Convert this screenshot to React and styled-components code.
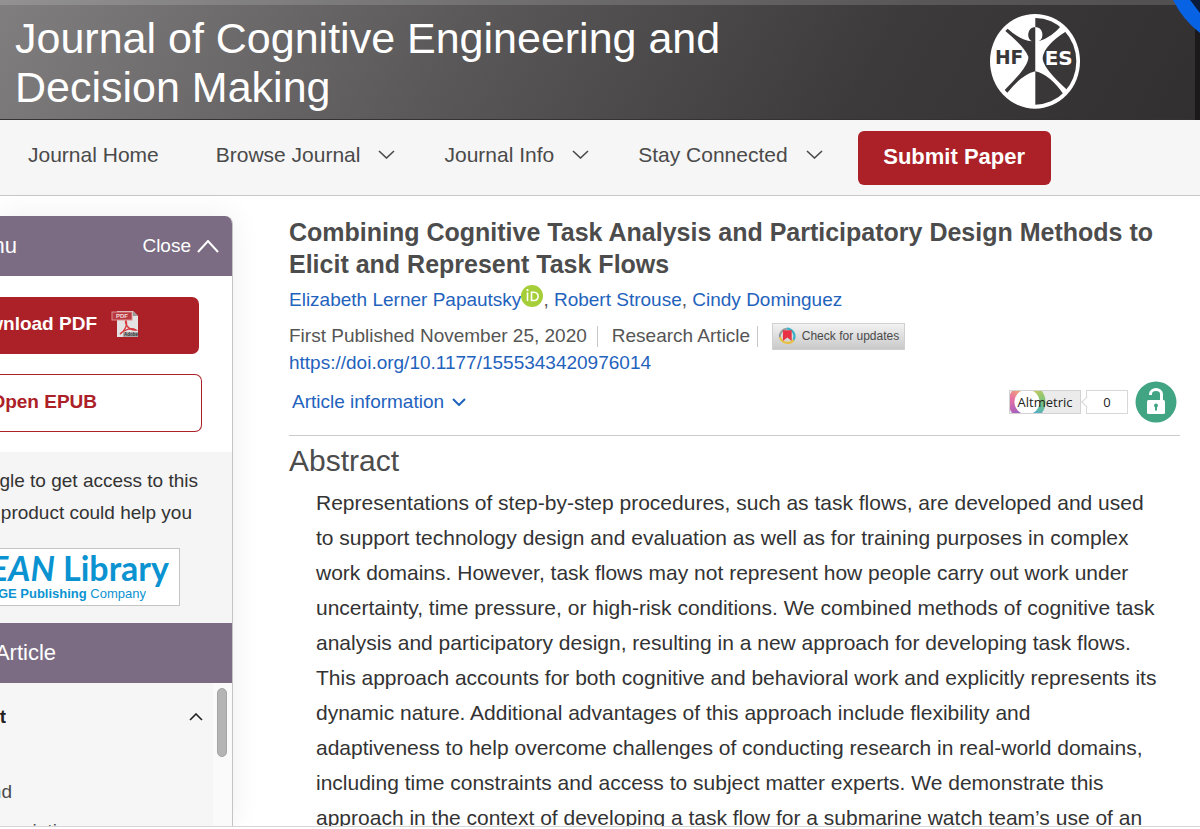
import React from "react";
import styled, { createGlobalStyle } from "styled-components";

const GlobalStyle = createGlobalStyle`
  * {
    box-sizing: border-box;
  }

  body {
    margin: 0;
    background: #fff;
    font-family: "Liberation Sans", Arial, sans-serif;
    color: #333;
  }

  h1, h2, h3, p {
    margin: 0;
  }

  a {
    color: #1f63bd;
    text-decoration: none;
  }

  button {
    font-family: inherit;
    cursor: pointer;
  }
`;

const Page = styled.div`
  display: flex;
  flex-direction: column;
  height: 100vh;
  overflow: hidden;
`;

const Banner = styled.header`
  display: flex;
  justify-content: space-between;
  padding: 9px 120px 7px 15px;
  border-top: 5px solid rgba(255, 255, 255, 0.15);
  border-bottom: 1px solid #333;
  background: linear-gradient(120deg, #807e7f 0%, #5a5859 38%, #3d3a3b 72%, #322f30 100%) border-box;
  position: relative;
  flex: none;
`;

const JournalName = styled.h1`
  max-width: 760px;
  font-size: 43px;
  font-weight: 400;
  line-height: 49px;
  color: #fff;
`;

const Society = styled.svg`
  width: 90px;
  height: 95px;
  flex: none;
`;

const Corner = styled.svg`
  position: absolute;
  top: -5px;
  right: 0;
  width: 30px;
  height: 120px;
`;

const Nav = styled.nav`
  display: flex;
  align-items: center;
  flex: none;
  height: 76px;
  padding: 0 28px;
  background: #f6f6f6;
  border-bottom: 1px solid #c9c9c9;
`;

const NavLink = styled.a`
  display: flex;
  align-items: center;
  gap: 18px;
  margin-right: ${(p) => p.$gap || 49}px;
  padding-bottom: 6px;
  font-size: 21px;
  line-height: 26px;
  color: #4a4a4a;
  white-space: nowrap;
`;

const SubmitButton = styled.button`
  width: 193px;
  height: 54px;
  padding: 0 6px 2px;
  border: 0;
  border-radius: 6px;
  background: #ac2127;
  color: #fff;
  font-size: 22px;
  font-weight: 700;
`;

const Columns = styled.div`
  display: flex;
  flex: 1;
  min-height: 0;
  padding-top: 20px;
`;

const Sidebar = styled.aside`
  display: flex;
  flex-direction: column;
  width: 233px;
  flex: none;
  border-right: 1px solid #c4c4c4;
  border-top-right-radius: 8px;
  box-shadow: 0 0 30px rgba(0, 0, 0, 0.07);
  overflow: hidden;
`;

const SideBar = styled.div`
  display: flex;
  align-items: center;
  justify-content: space-between;
  flex: none;
  height: 60px;
  padding-right: 13px;
  background: #7b6c83;
  color: #fff;
  font-size: 22px;
`;

/* Right-aligned text that runs off the left edge of the window */
const Clip = styled.span`
  display: flex;
  justify-content: flex-end;
  width: ${(p) => p.$width}px;
  overflow: hidden;
  white-space: nowrap;
`;

const CloseButton = styled.button`
  display: flex;
  align-items: center;
  gap: 6px;
  padding: 0;
  border: 0;
  background: none;
  color: #fff;
  font-size: 19px;
`;

const Downloads = styled.div`
  display: flex;
  flex-direction: column;
  gap: 20px;
  padding: 21px 0 20px;
  background: #fff;
`;

const FormatButton = styled.button`
  display: flex;
  align-items: center;
  gap: 14px;
  width: ${(p) => (p.$outline ? 202 : 199)}px;
  height: ${(p) => (p.$outline ? 58 : 57)}px;
  padding: 0 0 3px;
  border: ${(p) => (p.$outline ? "1px solid #ac2127" : "0")};
  border-left: 0;
  border-radius: 0 7px 7px 0;
  background: ${(p) => (p.$outline ? "#fff" : "#ac2127")};
  color: ${(p) => (p.$outline ? "#ac2127" : "#fff")};
  font-size: 19px;
  font-weight: 700;
`;

const Promo = styled.div`
  display: flex;
  flex-direction: column;
  align-items: flex-start;
  padding: 13px 0 17px;
  background: #f5f5f5;
  font-size: 19px;
  line-height: 32px;
`;

const LibraryLink = styled.a`
  display: flex;
  flex-direction: column;
  align-items: flex-start;
  width: 180px;
  height: 58px;
  margin-top: 19px;
  border: 1px solid #c4c4c4;
  border-left: 0;
  background: #fff;
  color: #0b93d1;
`;

const LibraryName = styled.span`
  font-family: Lato, sans-serif;
  font-size: 34px;
  font-weight: 700;
  line-height: 38px;
`;

const LibraryOwner = styled.span`
  font-size: 13px;
  line-height: 14px;
`;

const Contents = styled.div`
  display: flex;
  flex: 1;
  min-height: 0;
  background: #f6f6f6;
`;

const Sections = styled.div`
  display: flex;
  flex-direction: column;
  flex: 1;
  padding-top: 22px;
`;

const SectionTitle = styled.div`
  display: flex;
  align-items: center;
  justify-content: space-between;
  padding-right: 10px;
  font-size: 19px;
  font-weight: 700;
  line-height: 24px;
  color: #222;
`;

const SectionLink = styled.a`
  margin-top: ${(p) => p.$top}px;
  font-size: 19px;
  line-height: 24px;
  color: #4a4a4a;
`;

const Track = styled.div`
  width: 19px;
  padding: 5px 4px;
  background: #fafafa;
`;

const Thumb = styled.div`
  height: 69px;
  width: 10px;
  border: 1px solid #a4a4a4;
  border-radius: 5px;
  background: #b4b4b4;
`;

const Article = styled.main`
  flex: 1;
  min-width: 0;
  padding: 0 20px 0 56px;
  overflow: hidden;
`;

const Title = styled.h2`
  font-size: 25px;
  line-height: 32px;
  color: #4c4c4c;
`;

const Authors = styled.div`
  display: flex;
  align-items: center;
  font-size: 19px;
  line-height: 40px;
  color: #555;
  white-space: pre;
`;

const Orcid = styled.svg`
  width: 22px;
  height: 22px;
  margin-bottom: 8px;
`;

const Meta = styled.div`
  display: flex;
  align-items: center;
  height: 32px;
  font-size: 19px;
  color: #555;
`;

const Divider = styled.span`
  width: 1px;
  height: 21px;
  margin: 0 14px 0 ${(p) => p.$left}px;
  background: #c8c8c8;
`;

const UpdatesButton = styled.button`
  display: flex;
  align-items: center;
  gap: 5px;
  width: 133px;
  height: 27px;
  padding: 0 5px;
  border: 1px solid #d0d0d0;
  background: linear-gradient(#f2f2f2, #c9c9c9);
  color: #4a4a4a;
  font-size: 12px;
  white-space: nowrap;
`;

const Doi = styled.a`
  display: block;
  font-size: 19px;
  line-height: 22px;
`;

const InfoRow = styled.div`
  display: flex;
  align-items: center;
  justify-content: space-between;
  height: 62px;
  padding: 0 3px 5px;
  border-bottom: 1px solid #ccc;
`;

const InfoButton = styled.button`
  display: flex;
  align-items: center;
  gap: 8px;
  padding: 0;
  border: 0;
  background: none;
  color: #1f63bd;
  font-size: 19px;
`;

const Badges = styled.div`
  display: flex;
  align-items: center;
`;

const Altmetric = styled.a`
  width: 72px;
  height: 24px;
  border: 1px solid #d2d2d2;
  background:
    radial-gradient(circle at 17px 11px, #fff 0 12px, transparent 13px 18px, #ebebeb 19px),
    conic-gradient(from 0deg at 17px 11px, #f2d14b, #79c47b 25%, #48a9d8 42%, #a45fbd 62%, #e86fa5 78%, #f2d14b);
  font-family: "Open Sans", sans-serif;
  font-size: 13px;
  font-weight: 500;
  line-height: 22px;
  text-align: center;
  color: #222;
`;

const Score = styled.span`
  position: relative;
  width: 42px;
  height: 24px;
  margin: 0 7px 0 5px;
  border: 1px solid #d8d8d8;
  font-family: "Open Sans", sans-serif;
  font-size: 13px;
  font-weight: 500;
  line-height: 22px;
  text-align: center;
  color: #222;

  &::before {
    content: "";
    position: absolute;
    top: 7px;
    left: -4px;
    width: 7px;
    height: 7px;
    border: 1px solid #d8d8d8;
    border-top: 0;
    border-right: 0;
    background: #fff;
    transform: rotate(45deg);
  }
`;

const AbstractTitle = styled.h3`
  font-size: 30px;
  font-weight: 400;
  line-height: 49px;
  color: #4c4c4c;
`;

const AbstractText = styled.p`
  padding: 0 22px 0 27px;
  font-size: 21px;
  line-height: 35px;
  color: #333;
`;

const StatusEdge = styled.div`
  flex: none;
  height: 3px;
  border-top: 1px solid #d6d6d6;
  background: #fff;
`;

const Chevron = ({ width = 17, height = 9, stroke = 1.6, up }) => (
  <svg width={width} height={height} viewBox={`0 0 ${width} ${height}`} fill="none" stroke="currentColor" strokeWidth={stroke}>
    <path d={up ? `M1 ${height - 1}L${width / 2} 1L${width - 1} ${height - 1}` : `M1 1L${width / 2} ${height - 1}L${width - 1} 1`} />
  </svg>
);

const SocietyLogo = () => (
  <Society viewBox="0 0 270 285" role="img" aria-label="HFES">
    <ellipse cx="135" cy="142" rx="135" ry="142" fill="#fff" />
    <path d="M136 12A123 130 0 0 1 136 272Z" fill="#3a3738" />
    <path d="M136 39A22 23 0 0 0 126 82Q90 78 53 44L46 51Q105 100 115 128Q118 155 44 228L52 236Q95 182 136 172Z" fill="#3a3738" />
    <path d="M136 39A22 23 0 0 1 146 82Q185 70 213 36L229 52Q165 92 158 130Q155 160 234 230L222 243Q180 182 136 172Z" fill="#fff" />
    <text x="15" y="151" fontFamily="DejaVu Sans" fontWeight="700" fontSize="56" fill="#3a3738">HF</text>
    <text x="164" y="153" fontFamily="DejaVu Sans" fontWeight="700" fontSize="60" fill="#fff" stroke="#3a3738" strokeWidth="6" paintOrder="stroke">ES</text>
  </Society>
);

const PdfIcon = () => (
  <svg width="28" height="28" viewBox="0 0 28 28">
    <path d="M6 1H22L27 6V27H6Z" fill="#e4e2e2" />
    <path d="M22 1V6H27Z" fill="#999" />
    <rect x="1" y="2" width="20" height="8" fill="#b8393f" stroke="#db9093" strokeWidth="1" />
    <text x="5" y="8" fontFamily="Liberation Sans" fontWeight="700" fontSize="6" fill="#f4dede">PDF</text>
    <path d="M9 24C13 22 17 15 15 11C13 12 17 21 25 20C20 17 13 20 9 24Z" fill="none" stroke="#d6383d" strokeWidth="1.4" />
    <rect x="12" y="22" width="15" height="5" fill="#aaa" />
    <text x="13" y="26" fontFamily="Liberation Sans" fontWeight="700" fontSize="4.5" fill="#333">Adobe</text>
  </svg>
);

const OrcidIcon = () => (
  <Orcid viewBox="0 0 22 22">
    <circle cx="11" cy="11" r="11" fill="#a6ce39" />
    <path d="M6.5 7.5V16M10.5 7.2V15.5H13C18.5 15.5 18.5 7.2 13 7.2Z" fill="none" stroke="#fff" strokeWidth="1.6" />
    <circle cx="6.5" cy="5.2" r="1.1" fill="#fff" />
  </Orcid>
);

const CrossmarkIcon = () => (
  <svg width="19" height="19" viewBox="0 0 19 19" fill="none">
    <path d="M2 11A8 8 0 0 1 9 1.5" stroke="#8f9b9c" strokeWidth="2" />
    <path d="M9 1.5A8 8 0 0 1 16 13" stroke="#3eb1c8" strokeWidth="2.2" />
    <path d="M2 10A8 8 0 0 0 16 13" stroke="#e6c24a" strokeWidth="2.4" />
    <path d="M5 3H14V14L9.5 10.5L5 14Z" fill="#e63244" />
  </svg>
);

const OpenAccessIcon = () => (
  <svg width="42" height="42" viewBox="0 0 42 42" role="img" aria-label="Open access">
    <circle cx="21" cy="21" r="20.5" fill="#41a583" />
    <rect x="12" y="19" width="18" height="14" rx="1.5" fill="#fff" />
    <path d="M15.5 14V13A5.5 4.5 0 0 1 26.5 13V20" fill="none" stroke="#fff" strokeWidth="3" />
    <circle cx="21" cy="24.5" r="2" fill="#41a583" />
    <path d="M21 25V29.5" stroke="#41a583" strokeWidth="2" />
  </svg>
);

const App = () => {
  return (
    <Page>
      <GlobalStyle />
      <Banner>
        <JournalName>Journal of Cognitive Engineering and Decision Making</JournalName>
        <SocietyLogo />
        <Corner viewBox="0 0 30 120" aria-hidden="true">
          <rect x="25" y="0" width="5" height="120" fill="#1b191a" />
          <path d="M20 0H30V14Z" fill="#0b1a38" />
          <path d="M3 0H20L30 13V33Q13 20 3 0Z" fill="#0862e4" />
        </Corner>
      </Banner>
      <Nav>
        <NavLink href="#home" $gap={57}>Journal Home</NavLink>
        <NavLink href="#browse">Browse Journal <Chevron /></NavLink>
        <NavLink href="#info">Journal Info <Chevron /></NavLink>
        <NavLink href="#connect" $gap={35}>Stay Connected <Chevron /></NavLink>
        <SubmitButton>Submit Paper</SubmitButton>
      </Nav>
      <Columns>
        <Sidebar>
          <SideBar>
            <Clip $width={17}>nu</Clip>
            <CloseButton>Close <Chevron up width={22} height={13} stroke={2} /></CloseButton>
          </SideBar>
          <Downloads>
            <FormatButton>
              <Clip $width={97}>wnload PDF</Clip>
              <PdfIcon />
            </FormatButton>
            <FormatButton $outline>
              <Clip $width={97}>Open EPUB</Clip>
            </FormatButton>
          </Downloads>
          <Promo>
            <Clip $width={198}>gle to get access to this</Clip>
            <Clip $width={192}>product could help you</Clip>
            <LibraryLink href="#library">
              <LibraryName><Clip $width={169}><span><i>EAN</i> Library</span></Clip></LibraryName>
              <LibraryOwner><Clip $width={146}><span><b>GE Publishing</b> Company</span></Clip></LibraryOwner>
            </LibraryLink>
          </Promo>
          <SideBar>
            <Clip $width={56}>Article</Clip>
          </SideBar>
          <Contents>
            <Sections>
              <SectionTitle>
                <Clip $width={6}>t</Clip>
                <Chevron up width={14} height={8} />
              </SectionTitle>
              <SectionLink href="#background" $top={51}><Clip $width={12}>nd</Clip></SectionLink>
              <SectionLink href="#description" $top={15}><Clip $width={78}>iption</Clip></SectionLink>
            </Sections>
            <Track><Thumb /></Track>
          </Contents>
        </Sidebar>
        <Article>
          <Title>Combining Cognitive Task Analysis and Participatory Design Methods to Elicit and Represent Task Flows</Title>
          <Authors>
            <a href="#papautsky">Elizabeth Lerner Papautsky</a>
            <OrcidIcon />
            <span>, </span>
            <a href="#strouse">Robert Strouse</a>
            <span>, </span>
            <a href="#dominguez">Cindy Dominguez</a>
          </Authors>
          <Meta>
            First Published November 25, 2020
            <Divider $left={10} />
            Research Article
            <Divider $left={7} />
            <UpdatesButton><CrossmarkIcon />Check for updates</UpdatesButton>
          </Meta>
          <Doi href="#doi">https://doi.org/10.1177/1555343420976014</Doi>
          <InfoRow>
            <InfoButton>Article information <Chevron width={14} height={8} stroke={2} /></InfoButton>
            <Badges>
              <Altmetric href="#altmetric">Altmetric</Altmetric>
              <Score>0</Score>
              <OpenAccessIcon />
            </Badges>
          </InfoRow>
          <AbstractTitle>Abstract</AbstractTitle>
          <AbstractText>
            Representations of step-by-step procedures, such as task flows, are developed and used to support
            technology design and evaluation as well as for training purposes in complex work domains. However,
            task flows may not represent how people carry out work under uncertainty, time pressure, or high-risk
            conditions. We combined methods of cognitive task analysis and participatory design, resulting in a
            new approach for developing task flows. This approach accounts for both cognitive and behavioral work
            and explicitly represents its dynamic nature. Additional advantages of this approach include
            flexibility and adaptiveness to help overcome challenges of conducting research in real-world domains,
            including time constraints and access to subject matter experts. We demonstrate this approach in the
            context of developing a task flow for a submarine watch team’s use of an
          </AbstractText>
        </Article>
      </Columns>
      <StatusEdge />
    </Page>
  );
};

export default App;
